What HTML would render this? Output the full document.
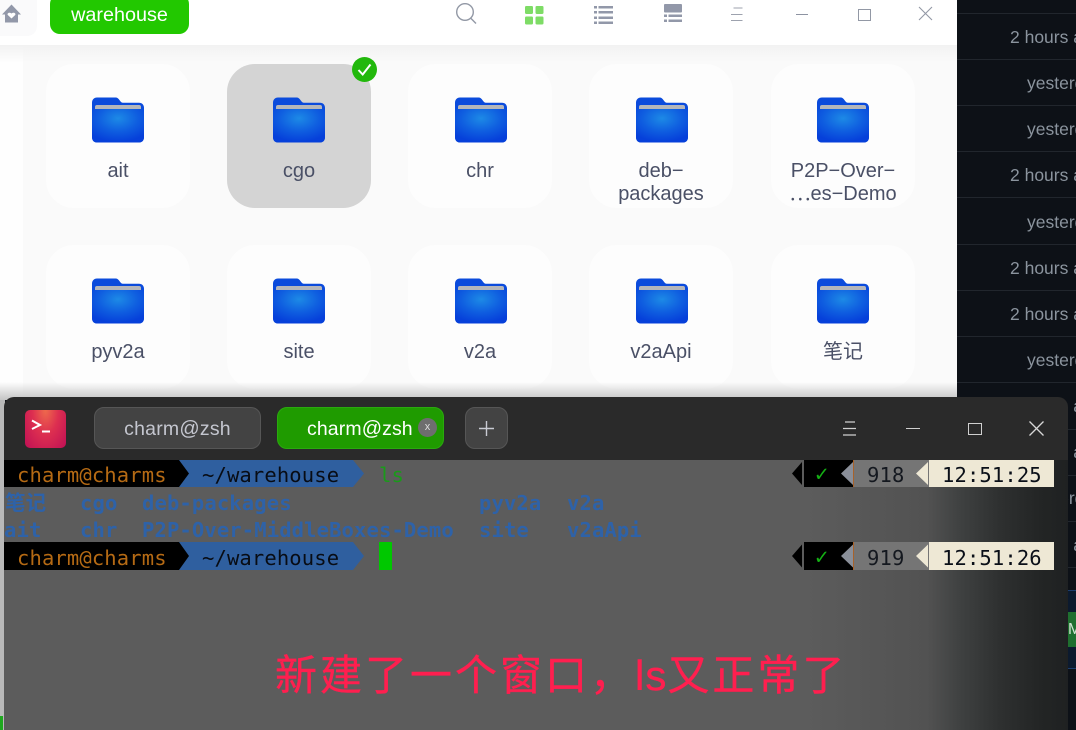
<!DOCTYPE html>
<html><head><meta charset="utf-8">
<style>
html,body{margin:0;padding:0;width:1076px;height:730px;overflow:hidden;background:#0d1117}
*{box-sizing:border-box}
.a{position:absolute}
body{font-family:"Liberation Sans","Noto Sans CJK SC",sans-serif;position:relative}
.card{position:absolute;width:144px;height:144px;border-radius:28px;background:#fdfdfd;text-align:center;color:#4a5066;font-size:20px;line-height:23px}
.card svg{position:absolute;left:46px;top:33px}
.card span{position:absolute;left:0;right:0;top:96px}
.rt{position:absolute;font-size:17.5px;color:#8b949e;white-space:nowrap;line-height:20px}
.rl{position:absolute;left:957px;width:119px;height:1px;background:#21262d}
.m{position:absolute;font-family:"DejaVu Sans Mono","Noto Sans CJK SC",monospace;font-size:20.5px;line-height:28px;white-space:pre;letter-spacing:.13px}
.b{font-weight:bold;color:#2e62a8;line-height:27px}
</style></head><body>

<!-- right dark column -->
<div class="a" style="left:957px;top:0;width:119px;height:730px;background:#0d1117"></div>
<div class="rl" style="top:13px"></div><div class="rl" style="top:59px"></div><div class="rl" style="top:105px"></div><div class="rl" style="top:151px"></div><div class="rl" style="top:197px"></div><div class="rl" style="top:244px"></div><div class="rl" style="top:290px"></div><div class="rl" style="top:336px"></div><div class="rl" style="top:382px"></div><div class="rl" style="top:429px"></div><div class="rl" style="top:475px"></div><div class="rl" style="top:521px"></div><div class="rl" style="top:567px"></div>
<div class="rt" style="left:1010px;top:27px">2 hours ago</div>
<div class="rt" style="left:1027px;top:73px">yesterday</div>
<div class="rt" style="left:1027px;top:119px">yesterday</div>
<div class="rt" style="left:1010px;top:165px">2 hours ago</div>
<div class="rt" style="left:1027px;top:212px">yesterday</div>
<div class="rt" style="left:1010px;top:258px">2 hours ago</div>
<div class="rt" style="left:1010px;top:304px">2 hours ago</div>
<div class="rt" style="left:1027px;top:350px">yesterday</div>
<div class="rt" style="left:1010px;top:396px">2 hours ago</div>
<div class="rt" style="left:1010px;top:442px">2 hours ago</div>
<div class="rt" style="left:1027px;top:488px">yesterday</div>
<div class="rt" style="left:1010px;top:535px">2 hours ago</div>
<div class="a" style="left:1068px;top:590px;width:8px;height:79px;background:#0c1a2e;border-top:1px solid #1c3d6e;border-bottom:1px solid #1c3d6e"></div>
<div class="a" style="left:1068px;top:612px;width:8px;height:35px;background:#1f6f2f;overflow:hidden;color:#cfe3d0;font-size:16px;line-height:35px">M</div>

<!-- file manager window -->
<div class="a" style="left:0;top:0;width:957px;height:400px;background:#fafafa;overflow:hidden">
  <div class="a" style="left:0;top:45px;width:23px;height:355px;background:#fefefe"></div>
  <div class="a" style="left:0;top:45px;width:957px;height:18px;background:linear-gradient(#f2f2f2,rgba(250,250,250,0))"></div>
  <div class="a" style="left:0;top:0;width:957px;height:45px;background:#fff"></div>
  <div class="a" style="left:0;top:0;width:37px;height:36px;background:#fafafb;border-bottom-right-radius:10px"></div>
  <svg class="a" style="left:1px;top:4px" width="20" height="20" viewBox="0 0 20 20"><path d="M10.500 0.500L20 10.500H17V18.500H4V10.500H1Z" fill="#9298a9"/><path d="M10.500 14.500L6.800 11C5.800 9.500 8 7.600 10.500 9.500C13 7.600 15.200 9.500 14.200 11Z" fill="#fff"/></svg>
  <div class="a" style="left:50px;top:-6px;width:139px;height:40px;background:#22c800;border-radius:10px;color:#fff;font-size:19.800px;line-height:40px;text-align:center"><span style="position:relative;top:1px">warehouse</span></div>

  <!-- toolbar icons -->
  <svg class="a" style="left:455px;top:2px" width="24" height="24" viewBox="0 0 24 24" fill="none" stroke="#9298a5" stroke-width="1.400"><circle cx="10" cy="10" r="8.300"/><path d="M15.800 16.300L21 21.500"/></svg>
  <svg class="a" style="left:525px;top:6px" width="19" height="19" viewBox="0 0 19 19" fill="#7edc66"><rect x="0" y="0" width="8" height="8" rx="1.200"/><rect x="10.500" y="0" width="8" height="8" rx="1.200"/><rect x="0" y="10.500" width="8" height="8" rx="1.200"/><rect x="10.500" y="10.500" width="8" height="8" rx="1.200"/></svg>
  <svg class="a" style="left:594px;top:6px" width="19" height="19" viewBox="0 0 19 19" fill="#9298a9"><rect x="0" y="0" width="3" height="2.500"/><rect x="4.500" y="0" width="14.500" height="2.500"/><rect x="0" y="5" width="3" height="2.500"/><rect x="4.500" y="5" width="14.500" height="2.500"/><rect x="0" y="10.500" width="3" height="2.500"/><rect x="4.500" y="10.500" width="14.500" height="2.500"/><rect x="0" y="15.500" width="3" height="2.500"/><rect x="4.500" y="15.500" width="14.500" height="2.500"/></svg>
  <svg class="a" style="left:664px;top:4px" width="19" height="19" viewBox="0 0 19 19" fill="#9298a9"><rect x="0" y="0" width="18" height="8.500" rx="1"/><rect x="0" y="10.500" width="3" height="2.500"/><rect x="4.500" y="10.500" width="13.500" height="2.500"/><rect x="0" y="15.500" width="3" height="2.500"/><rect x="4.500" y="15.500" width="13.500" height="2.500"/></svg>
  <svg class="a" style="left:731px;top:7px" width="14" height="15" viewBox="0 0 14 15" stroke="#9da2ae" stroke-width="1.100" fill="none"><path d="M2.500 1H11.500M0 7.500H11.500M0 13.500H11.500"/></svg>
  <div class="a" style="left:796px;top:14px;width:12px;height:1px;background:#8d93a2"></div>
  <div class="a" style="left:858px;top:9px;width:13px;height:12px;border:1.300px solid #9298a5"></div>
  <svg class="a" style="left:918px;top:6px" width="15" height="15" viewBox="0 0 15 15" stroke="#9298a5" stroke-width="1.100" fill="none"><path d="M1 1L14 14M14 1L1 14"/></svg>

  <svg width="0" height="0" style="position:absolute"><defs>
    <radialGradient id="fg" cx="50%" cy="28%" r="70%"><stop offset="0" stop-color="#1d8ae6"/><stop offset="0.55" stop-color="#0f5ee0"/><stop offset="1" stop-color="#0640da"/></radialGradient>
    <symbol id="folder" viewBox="0 0 52 46"><path d="M0 6C0 2.500 2 0.500 5 0.500H24C27 0.500 28 5.800 31 5.800H47C50 5.800 52 7.800 52 10.800V40C52 43.500 50 45.500 47 45.500H5C2 45.500 0 43.500 0 40Z" fill="#0b4bdc"/><path d="M3 10Q3 8 5 8H47Q49 8 49 10V12H3Z" fill="#b4b6bb"/><path d="M0 12H52V40C52 43.500 50 45.500 47 45.500H5C2 45.500 0 43.500 0 40Z" fill="url(#fg)"/></symbol>
  </defs></svg>

  <div class="card" style="left:46px;top:64px"><svg width="52" height="46"><use href="#folder"/></svg><span>ait</span></div>
  <div class="card" style="left:227px;top:64px;background:#d4d4d4"><svg width="52" height="46"><use href="#folder"/></svg><span>cgo</span></div>
  <div class="card" style="left:408px;top:64px"><svg style="left:47px" width="52" height="46"><use href="#folder"/></svg><span>chr</span></div>
  <div class="card" style="left:589px;top:64px"><svg style="left:47px" width="52" height="46"><use href="#folder"/></svg><span>deb−<br>packages</span></div>
  <div class="card" style="left:771px;top:64px"><svg width="52" height="46"><use href="#folder"/></svg><span style="left:-10px;right:-10px">P2P−Over−<br>⋯es−Demo</span></div>
  <div class="card" style="left:46px;top:245px"><svg width="52" height="46"><use href="#folder"/></svg><span>pyv2a</span></div>
  <div class="card" style="left:227px;top:245px"><svg width="52" height="46"><use href="#folder"/></svg><span>site</span></div>
  <div class="card" style="left:408px;top:245px"><svg style="left:47px" width="52" height="46"><use href="#folder"/></svg><span>v2a</span></div>
  <div class="card" style="left:589px;top:245px"><svg style="left:47px" width="52" height="46"><use href="#folder"/></svg><span>v2aApi</span></div>
  <div class="card" style="left:771px;top:245px"><svg width="52" height="46"><use href="#folder"/></svg><span>笔记</span></div>

  <svg class="a" style="left:352px;top:57px" width="25" height="25" viewBox="0 0 25 25"><circle cx="12.500" cy="12.500" r="12.500" fill="#22b80c"/><path d="M6.500 13L10.700 17.500L18.500 7.500" stroke="#fff" stroke-width="2" fill="none"/></svg>
  <div class="a" style="left:0;top:382px;width:957px;height:18px;background:linear-gradient(rgba(200,200,200,0),#c4c4c4)"></div>
</div>
<div class="a" style="left:0;top:400px;width:5px;height:330px;background:#b9b9b9"></div>
<div class="a" style="left:0;top:716px;width:3px;height:14px;background:#1fa81f"></div>

<!-- terminal -->
<div class="a" style="left:4px;top:397px;width:1064px;height:333px;background:#2a2a2a;border-radius:10px 10px 0 0;overflow:hidden">
  <div class="a" style="left:0;top:63px;width:1064px;height:270px;background:linear-gradient(90deg,#5c5c5c 0,#5c5c5c 800px,#525252 923px,#3f4141 956px,#2e3030 996px,#232525 1036px,#1f2122 1064px)"></div>
  <div class="a" style="left:21px;top:13px;width:41px;height:38px;border-radius:5px;background:radial-gradient(ellipse at 50% 0,#ee6a4c 0,#dd2f50 45%,#bf0f55 100%)"></div>
  <svg class="a" style="left:21px;top:13px" width="41" height="38" viewBox="0 0 41 38" fill="none" stroke="#fff" stroke-width="2"><path d="M7 10.500L15 15L7 19"/><path d="M17 21.500H25"/></svg>

  <div class="a" style="left:90px;top:10px;width:167px;height:42px;background:#434343;border:1px solid #565656;border-radius:10px;color:#c4c6cf;font-size:19.500px;line-height:42px;text-align:center;letter-spacing:.2px">charm<span style="font-size:20px">@</span>zsh</div>
  <div class="a" style="left:273px;top:10px;width:167px;height:42px;background:#1f9b00;border:1px solid #2aa90e;border-radius:10px;color:#fff;font-size:19.500px;line-height:42px;padding-left:29px;letter-spacing:.1px">charm<span style="font-size:20px">@</span>zsh</div>
  <div class="a" style="left:414px;top:21px;width:19px;height:19px;border-radius:50%;background:#6e6e6e;color:#ddd;font-size:11px;line-height:18px;text-align:center">x</div>
  <div class="a" style="left:461px;top:10px;width:43px;height:42px;background:#434343;border:1px solid #565656;border-radius:10px"></div>
  <svg class="a" style="left:475px;top:24px" width="15" height="15" stroke="#c9cbd3" stroke-width="1.400"><path d="M7.500 0V15M0 7.500H15"/></svg>

  <svg class="a" style="left:839px;top:24px" width="14" height="15" stroke="#d0d0d0" stroke-width="1.200" fill="none"><path d="M2 1H12M0 7.500H13M0 14H13"/></svg>
  <div class="a" style="left:902px;top:31px;width:14px;height:1px;background:#d0d0d0"></div>
  <div class="a" style="left:964px;top:26px;width:14px;height:12px;border:1.500px solid #d0d0d0"></div>
  <svg class="a" style="left:1025px;top:24px" width="15" height="15" stroke="#d8d8d8" stroke-width="1.300" fill="none"><path d="M0.500 0.500L14.500 14.500M14.500 0.500L0.500 14.500"/></svg>

  <!-- line 1 prompt -->
  <div class="a" style="left:0;top:63px;width:175px;height:27px;background:#000"></div>
  <svg class="a" style="left:175px;top:63px" width="186" height="27"><path d="M0 0H174L185 13.500L174 27H0Z" fill="#2f5f9f"/><path d="M0 0L10 13.500L0 27Z" fill="#000"/></svg>
  <div class="m" style="left:13px;top:64px;color:#b56a14">charm@charms</div>
  <div class="m" style="left:198px;top:64px;color:#080c14">~/warehouse</div>
  <div class="m" style="left:375px;top:64px;color:#1a9a1a">ls</div>

  <!-- ls output -->
  <div class="m b" style="left:1px;top:93px">笔记</div>
  <div class="m b" style="left:76px;top:93px">cgo</div>
  <div class="m b" style="left:138px;top:93px">deb-packages</div>
  <div class="m b" style="left:475px;top:93px">pyv2a</div>
  <div class="m b" style="left:563px;top:93px">v2a</div>
  <div class="m b" style="left:0;top:120px">ait</div>
  <div class="m b" style="left:76px;top:120px">chr</div>
  <div class="m b" style="left:138px;top:120px">P2P-Over-MiddleBoxes-Demo</div>
  <div class="m b" style="left:475px;top:120px">site</div>
  <div class="m b" style="left:563px;top:120px">v2aApi</div>

  <!-- line 2 prompt -->
  <div class="a" style="left:0;top:145px;width:175px;height:28px;background:#000"></div>
  <svg class="a" style="left:175px;top:145px" width="186" height="28"><path d="M0 0H174L185 14L174 28H0Z" fill="#2f5f9f"/><path d="M0 0L10 14L0 28Z" fill="#000"/></svg>
  <div class="m" style="left:13px;top:147px;color:#b56a14">charm@charms</div>
  <div class="m" style="left:198px;top:147px;color:#080c14">~/warehouse</div>
  <div class="a" style="left:375px;top:145px;width:13px;height:28px;background:#00c800"></div>

  <!-- right prompt 1 -->
  <svg class="a" style="left:788px;top:63px" width="262" height="27"><path d="M0 13.500L10 2V25Z" fill="#000"/><rect x="12" y="0" width="50" height="27" fill="#000"/><path d="M49 13.500L61 2V25Z" fill="#8a8f99"/><rect x="61" y="0" width="1" height="27" fill="#a8622a"/><rect x="62" y="0" width="75" height="27" fill="#757575"/><path d="M124 13.500L136 2V25Z" fill="#eee8d5"/><rect x="137" y="0" width="125" height="27" fill="#eee8d5"/></svg>
  <div class="m" style="left:811px;top:64px;color:#14b014;font-size:22px;font-weight:bold">✓</div>
  <div class="m" style="left:863px;top:64px;color:#14181f">918</div>
  <div class="m" style="left:938px;top:64px;color:#0a0f18">12:51:25</div>

  <!-- right prompt 2 -->
  <svg class="a" style="left:788px;top:145px" width="262" height="28"><path d="M0 14L10 2.500V25.500Z" fill="#000"/><rect x="12" y="0" width="50" height="28" fill="#000"/><path d="M49 14L61 2.500V25.500Z" fill="#8a8f99"/><rect x="61" y="0" width="1" height="28" fill="#a8622a"/><rect x="62" y="0" width="75" height="28" fill="#757575"/><path d="M124 14L136 2.500V25.500Z" fill="#eee8d5"/><rect x="137" y="0" width="125" height="28" fill="#eee8d5"/></svg>
  <div class="m" style="left:811px;top:147px;color:#14b014;font-size:22px;font-weight:bold">✓</div>
  <div class="m" style="left:863px;top:147px;color:#14181f">919</div>
  <div class="m" style="left:938px;top:147px;color:#0a0f18">12:51:26</div>

  <!-- caption -->
  <div class="a" style="left:271px;top:251px;color:#ff1f4f;font-size:42px;line-height:56px;white-space:nowrap;font-family:'Liberation Sans','WenQuanYi Zen Hei','Noto Sans CJK SC',sans-serif;letter-spacing:3px;-webkit-text-stroke:.4px #ff1f4f">新建了一个窗口，<span style="letter-spacing:1px">ls</span>又正常了</div>
</div>
</body></html>
